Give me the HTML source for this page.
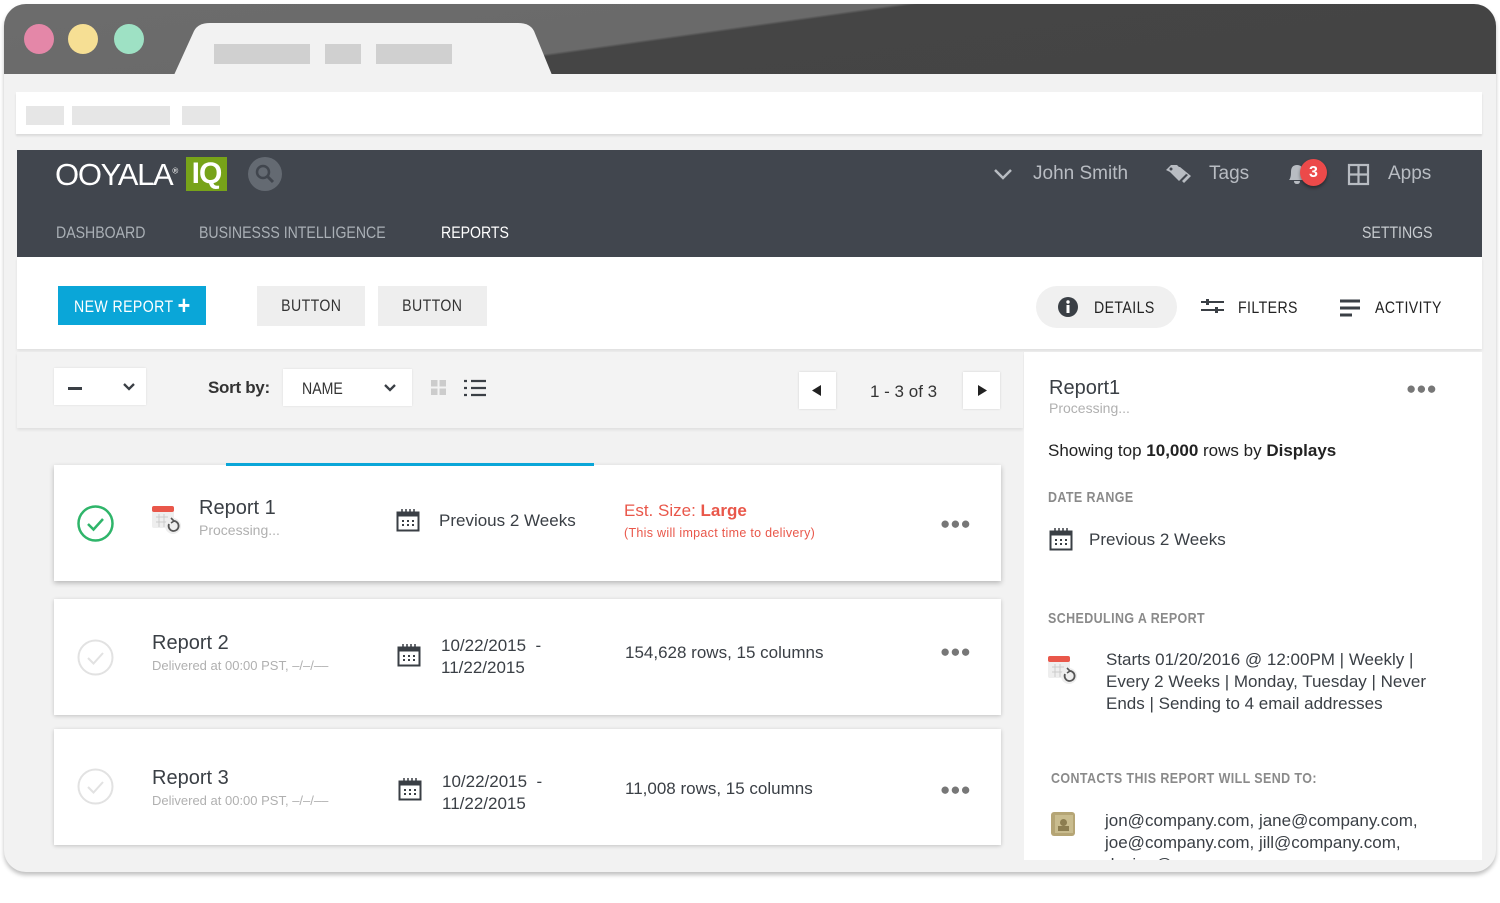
<!DOCTYPE html>
<html><head><meta charset="utf-8"><style>
*{box-sizing:border-box;margin:0;padding:0}
body{width:1500px;height:903px;background:#fff;font-family:"Liberation Sans",sans-serif;position:relative;overflow:hidden;color:#333}
.abs{position:absolute}
.nar{transform:scaleX(.83);transform-origin:left center;white-space:nowrap}
.ns{display:inline-block;transform:scaleX(.83);transform-origin:center}
.win{left:4px;top:4px;width:1492px;height:868px;border-radius:22px;background:#f2f2f2;box-shadow:0 3px 4px rgba(0,0,0,.25);overflow:hidden}
.top{left:0;top:0;width:1492px;height:70px;background:linear-gradient(172deg,#6c6c6c 0,#6a6a6a 45%,#454545 46%,#444 100%)}
.dot{width:30px;height:30px;border-radius:50%;top:20px}
.bar{background:#d0d0d0;height:20px}
.nav{left:17px;top:150px;width:1465px;height:107px;background:#41464e}
.navt{color:#aab0b6;font-size:17px;top:73px}
.hd{color:#b8bcc2;font-size:19px;top:13px}
.btn{background:#eee;font-size:17px;color:#333;text-align:center;line-height:40px;letter-spacing:.5px}
.card{background:#fff;box-shadow:0 1px 4px rgba(0,0,0,.2)}
.t{color:#3a3f45}
.dots{font-size:17px;color:#777;letter-spacing:0px}
.lab{font-size:15px;font-weight:bold;color:#8a8a8a;letter-spacing:.5px}
</style></head><body>
<div class="abs win">
 <div class="abs top"></div>
 <div class="abs dot" style="left:20px;background:#e487a8"></div>
 <div class="abs dot" style="left:64px;background:#f6df94"></div>
 <div class="abs dot" style="left:110px;background:#9ee1c4"></div>
 <svg class="abs" style="left:170px;top:19px" width="380" height="52"><path d="M0 52 L20 8 Q24 0 36 0 H344 Q356 0 360 8 L378 52Z" fill="#f2f2f2"/></svg>
 <div class="abs bar" style="left:210px;top:40px;width:96px"></div>
 <div class="abs bar" style="left:321px;top:40px;width:36px"></div>
 <div class="abs bar" style="left:372px;top:40px;width:76px"></div>
 <div class="abs" style="left:12px;top:88px;width:1466px;height:42px;background:#fff;box-shadow:0 2px 2px rgba(0,0,0,.1)"></div>
 <div class="abs" style="left:22px;top:102px;width:38px;height:19px;background:#e6e6e6"></div>
 <div class="abs" style="left:68px;top:102px;width:98px;height:19px;background:#e6e6e6"></div>
 <div class="abs" style="left:178px;top:102px;width:38px;height:19px;background:#e6e6e6"></div>
</div>
<div class="abs nav">
 <div class="abs" style="left:38px;top:7px;color:#fff;font-size:31px;letter-spacing:-1.3px">OOYALA<sup style="font-size:8px">®</sup></div>
 <div class="abs" style="left:169px;top:7px;width:41px;height:34px;background:#77a319;color:#fff;font-size:30px;font-weight:bold;line-height:34px;text-align:center;letter-spacing:-1px">IQ</div>
 <div class="abs" style="left:231px;top:7px;width:34px;height:34px;border-radius:50%;background:#646a72"><svg width="34" height="34"><circle cx="15" cy="15" r="6" fill="none" stroke="#41464e" stroke-width="2.5"/><path d="M19 19 L25 25" stroke="#41464e" stroke-width="3"/></svg></div>
 <svg class="abs" style="left:976px;top:17px" width="20" height="14"><path d="M2 3 L10 11 L18 3" fill="none" stroke="#b8bcc2" stroke-width="2.5"/></svg>
 <div class="abs hd" style="left:1016px">John Smith</div>
 <svg class="abs" style="left:1148px;top:13px" width="30" height="22"><path d="M1 7 L6 2 H12 L21 11 L14 18 L5 9Z" fill="#b8bcc2"/><path d="M9 4 H15 L26 13 L19 20 L17 18 L23 12 Z" fill="#b8bcc2"/><circle cx="6" cy="6" r="1.5" fill="#41464e"/></svg>
 <div class="abs hd" style="left:1192px">Tags</div>
 <svg class="abs" style="left:1269px;top:12px" width="22" height="24"><path d="M3 18 Q5 16 5 10 Q5 3 11 3 Q17 3 17 10 Q17 16 19 18Z M8 19 H14 Q14 22 11 22 Q8 22 8 19Z" fill="#b8bcc2"/></svg>
 <div class="abs" style="left:1283px;top:9px;width:27px;height:27px;border-radius:50%;background:#ec4a4a;color:#fff;font-size:16px;font-weight:bold;text-align:center;line-height:27px;box-shadow:0 2px 3px rgba(0,0,0,.4)">3</div>
 <svg class="abs" style="left:1330px;top:13px" width="24" height="24"><rect x="2" y="2" width="19" height="19" fill="none" stroke="#b8bcc2" stroke-width="2.2"/><path d="M11.5 2V21M2 11.5H21" stroke="#b8bcc2" stroke-width="2.2"/></svg>
 <div class="abs hd" style="left:1371px">Apps</div>
 <div class="abs navt nar" style="left:39px">DASHBOARD</div>
 <div class="abs navt nar" style="left:182px">BUSINESSS INTELLIGENCE</div>
 <div class="abs navt nar" style="left:424px;color:#fff">REPORTS</div>
 <div class="abs navt nar" style="left:1345px;color:#c8ccd0">SETTINGS</div>
</div>
<div class="abs" style="left:17px;top:257px;width:1465px;height:92px;background:#fff;box-shadow:0 2px 3px rgba(0,0,0,.08)"></div>
<div class="abs" style="left:58px;top:286px;width:148px;height:39px;background:#0aa6d8"></div>
<div class="abs nar" style="left:74px;top:286px;color:#fff;font-size:17px;line-height:39px;letter-spacing:.5px">NEW REPORT <b style="font-size:26px;vertical-align:-2px">+</b></div>
<div class="abs btn" style="left:257px;top:286px;width:108px"><span class="ns">BUTTON</span></div>
<div class="abs btn" style="left:378px;top:286px;width:109px"><span class="ns">BUTTON</span></div>
<div class="abs" style="left:1036px;top:286px;width:141px;height:42px;border-radius:21px;background:#f0f0f0"></div>
<svg class="abs" style="left:1057px;top:296px" width="22" height="22"><circle cx="11" cy="11" r="10" fill="#3a3f45"/><rect x="9.5" y="9" width="3" height="8" fill="#fff"/><circle cx="11" cy="6" r="1.7" fill="#fff"/></svg>
<div class="abs nar" style="left:1094px;top:298px;font-size:17px;color:#222;letter-spacing:.5px">DETAILS</div>
<svg class="abs" style="left:1200px;top:297px" width="26" height="20"><path d="M1 5H24M1 13H24" stroke="#3a3f45" stroke-width="2"/><rect x="6" y="2" width="3" height="6" fill="#3a3f45"/><rect x="15" y="10" width="3" height="6" fill="#3a3f45"/></svg>
<div class="abs nar" style="left:1238px;top:298px;font-size:17px;color:#222;letter-spacing:.5px">FILTERS</div>
<svg class="abs" style="left:1339px;top:299px" width="24" height="18"><path d="M1 2H21M1 9H21M1 16H13" stroke="#3a3f45" stroke-width="3"/></svg>
<div class="abs nar" style="left:1375px;top:298px;font-size:17px;color:#222;letter-spacing:.5px">ACTIVITY</div>
<!-- toolbar -->
<div class="abs" style="left:17px;top:352px;width:1006px;height:76px;background:#f3f3f3;box-shadow:0 2px 3px rgba(0,0,0,.08)"></div>
<div class="abs card" style="left:54px;top:368px;width:92px;height:37px;box-shadow:0 0 2px rgba(0,0,0,.1)"></div>
<div class="abs" style="left:68px;top:387px;width:14px;height:3px;background:#3a3f45"></div>
<svg class="abs" style="left:122px;top:382px" width="14" height="10"><path d="M2 2L7 7L12 2" fill="none" stroke="#3a3f45" stroke-width="2.3"/></svg>
<div class="abs" style="left:208px;top:378px;font-size:17px;font-weight:bold;color:#333;letter-spacing:-.3px">Sort by:</div>
<div class="abs card" style="left:283px;top:369px;width:129px;height:37px;box-shadow:0 0 2px rgba(0,0,0,.1)"></div>
<div class="abs nar" style="left:302px;top:379px;font-size:17px;color:#333">NAME</div>
<svg class="abs" style="left:383px;top:383px" width="14" height="10"><path d="M2 2L7 7L12 2" fill="none" stroke="#3a3f45" stroke-width="2.3"/></svg>
<svg class="abs" style="left:430px;top:379px" width="18" height="18"><rect x="1" y="1" width="6.5" height="6.5" fill="#ccc"/><rect x="9.5" y="1" width="6.5" height="6.5" fill="#ccc"/><rect x="1" y="9.5" width="6.5" height="6.5" fill="#ccc"/><rect x="9.5" y="9.5" width="6.5" height="6.5" fill="#ccc"/></svg>
<svg class="abs" style="left:463px;top:379px" width="24" height="18"><path d="M1 2H4M8 2H23M1 9H4M8 9H23M1 16H4M8 16H23" stroke="#3a3f45" stroke-width="2.2"/></svg>
<div class="abs card" style="left:799px;top:372px;width:37px;height:37px;box-shadow:0 0 2px rgba(0,0,0,.15)"><svg width="37" height="37"><path d="M22 13V24L13 18.5Z" fill="#222"/></svg></div>
<div class="abs" style="left:870px;top:382px;font-size:17px;color:#333">1 - 3 of 3</div>
<div class="abs card" style="left:963px;top:372px;width:37px;height:37px;box-shadow:0 0 2px rgba(0,0,0,.15)"><svg width="37" height="37"><path d="M15 13V24L24 18.5Z" fill="#222"/></svg></div>
<!-- cards -->
<div class="abs card" style="left:54px;top:465px;width:947px;height:116px;box-shadow:0 2px 5px rgba(0,0,0,.25)"></div>
<div class="abs" style="left:226px;top:463px;width:368px;height:3px;background:#0aa6d8"></div>
<svg class="abs" style="left:76px;top:505px" width="40" height="38"><circle cx="19.5" cy="18.5" r="17" fill="none" stroke="#2fb56a" stroke-width="2.5"/><path d="M12 19L17.5 24.5L27 14" fill="none" stroke="#2fb56a" stroke-width="2.5"/></svg>
<svg class="abs" style="left:150px;top:502px" width="34" height="34"><rect x="2" y="4" width="22" height="22" rx="2" fill="#eee"/><rect x="2" y="4" width="22" height="6" rx="2" fill="#e9574a"/><path d="M6 15H18M6 20H18M9 12V25M14 12V25" stroke="#ccc"/><circle cx="23" cy="24" r="8" fill="#eee"/><path d="M19 22 A5 5 0 1 0 23 19" fill="none" stroke="#555" stroke-width="1.8"/><path d="M21 16L24 19L21 21" fill="none" stroke="#555" stroke-width="1.6"/></svg>
<div class="abs t" style="left:199px;top:497px;font-size:20px">Report 1</div>
<div class="abs" style="left:199px;top:522px;font-size:14px;color:#b0b0b0">Processing...</div>
<svg class="abs" style="left:396px;top:508px" width="24" height="24"><rect x="1.5" y="4.5" width="21" height="18" fill="none" stroke="#3a3f45" stroke-width="2"/><rect x="1.5" y="4.5" width="21" height="4" fill="#3a3f45"/><path d="M6 1V5M10 1V5M14 1V5M18 1V5" stroke="#3a3f45" stroke-width="1.5"/><path d="M6 13h2M11 13h2M16 13h2M6 17h2M11 17h2M16 17h2" stroke="#3a3f45" stroke-width="2"/></svg>
<div class="abs t" style="left:439px;top:511px;font-size:17px">Previous 2 Weeks</div>
<div class="abs" style="left:624px;top:501px;font-size:17px;color:#e9574a">Est. Size: <b>Large</b></div>
<div class="abs" style="left:624px;top:526px;font-size:12.5px;color:#e9574a;letter-spacing:.3px">(This will impact time to delivery)</div>
<div class="abs dots" style="left:940px;top:514px">●●●</div>

<div class="abs card" style="left:54px;top:599px;width:947px;height:116px"></div>
<svg class="abs" style="left:76px;top:639px" width="40" height="38"><circle cx="19.5" cy="18.5" r="17" fill="none" stroke="#e2e2e2" stroke-width="2"/><path d="M12 19L17.5 24.5L27 14" fill="none" stroke="#e2e2e2" stroke-width="2"/></svg>
<div class="abs t" style="left:152px;top:632px;font-size:20px">Report 2</div>
<div class="abs" style="left:152px;top:658px;font-size:13px;color:#b0b0b0">Delivered at 00:00 PST, –/–/––</div>
<svg class="abs" style="left:397px;top:643px" width="24" height="24"><rect x="1.5" y="4.5" width="21" height="18" fill="none" stroke="#3a3f45" stroke-width="2"/><rect x="1.5" y="4.5" width="21" height="4" fill="#3a3f45"/><path d="M6 1V5M10 1V5M14 1V5M18 1V5" stroke="#3a3f45" stroke-width="1.5"/><path d="M6 13h2M11 13h2M16 13h2M6 17h2M11 17h2M16 17h2" stroke="#3a3f45" stroke-width="2"/></svg>
<div class="abs t" style="left:441px;top:635px;font-size:17px;line-height:22px">10/22/2015 &nbsp;-<br>11/22/2015</div>
<div class="abs t" style="left:625px;top:643px;font-size:17px">154,628 rows, 15 columns</div>
<div class="abs dots" style="left:940px;top:642px">●●●</div>

<div class="abs card" style="left:54px;top:729px;width:947px;height:116px"></div>
<svg class="abs" style="left:76px;top:768px" width="40" height="38"><circle cx="19.5" cy="18.5" r="17" fill="none" stroke="#e2e2e2" stroke-width="2"/><path d="M12 19L17.5 24.5L27 14" fill="none" stroke="#e2e2e2" stroke-width="2"/></svg>
<div class="abs t" style="left:152px;top:767px;font-size:20px">Report 3</div>
<div class="abs" style="left:152px;top:793px;font-size:13px;color:#b0b0b0">Delivered at 00:00 PST, –/–/––</div>
<svg class="abs" style="left:398px;top:777px" width="24" height="24"><rect x="1.5" y="4.5" width="21" height="18" fill="none" stroke="#3a3f45" stroke-width="2"/><rect x="1.5" y="4.5" width="21" height="4" fill="#3a3f45"/><path d="M6 1V5M10 1V5M14 1V5M18 1V5" stroke="#3a3f45" stroke-width="1.5"/><path d="M6 13h2M11 13h2M16 13h2M6 17h2M11 17h2M16 17h2" stroke="#3a3f45" stroke-width="2"/></svg>
<div class="abs t" style="left:442px;top:771px;font-size:17px;line-height:22px">10/22/2015 &nbsp;-<br>11/22/2015</div>
<div class="abs t" style="left:625px;top:779px;font-size:17px">11,008 rows, 15 columns</div>
<div class="abs dots" style="left:940px;top:780px">●●●</div>

<!-- details panel -->
<div class="abs" style="left:1024px;top:352px;width:458px;height:508px;background:#fff;overflow:hidden">
 <div class="abs t" style="left:25px;top:25px;font-size:20px">Report1</div>
 <div class="abs" style="left:25px;top:48px;font-size:14px;color:#b0b0b0">Processing...</div>
 <div class="abs dots" style="left:382px;top:27px">●●●</div>
 <div class="abs" style="left:24px;top:89px;font-size:17px;color:#222">Showing top <b>10,000</b> rows by <b>Displays</b></div>
 <div class="abs lab nar" style="left:24px;top:137px">DATE RANGE</div>
 <svg class="abs" style="left:25px;top:175px" width="24" height="24"><rect x="1.5" y="4.5" width="21" height="18" fill="none" stroke="#3a3f45" stroke-width="2"/><rect x="1.5" y="4.5" width="21" height="4" fill="#3a3f45"/><path d="M6 1V5M10 1V5M14 1V5M18 1V5" stroke="#3a3f45" stroke-width="1.5"/><path d="M6 13h2M11 13h2M16 13h2M6 17h2M11 17h2M16 17h2" stroke="#3a3f45" stroke-width="2"/></svg>
 <div class="abs t" style="left:65px;top:178px;font-size:17px">Previous 2 Weeks</div>
 <div class="abs lab nar" style="left:24px;top:258px">SCHEDULING A REPORT</div>
 <svg class="abs" style="left:22px;top:300px" width="34" height="34"><rect x="2" y="4" width="22" height="22" rx="2" fill="#eee"/><rect x="2" y="4" width="22" height="6" rx="2" fill="#e9574a"/><path d="M6 15H18M6 20H18M9 12V25M14 12V25" stroke="#ccc"/><circle cx="23" cy="24" r="8" fill="#eee"/><path d="M19 22 A5 5 0 1 0 23 19" fill="none" stroke="#555" stroke-width="1.8"/><path d="M21 16L24 19L21 21" fill="none" stroke="#555" stroke-width="1.6"/></svg>
 <div class="abs t" style="left:82px;top:297px;font-size:17px;line-height:22px;width:330px">Starts 01/20/2016 @ 12:00PM | Weekly | Every 2 Weeks | Monday, Tuesday | Never Ends | Sending to 4 email addresses</div>
 <div class="abs lab nar" style="left:27px;top:418px">CONTACTS THIS REPORT WILL SEND TO:</div>
 <div class="abs" style="left:27px;top:460px;width:24px;height:24px;border-radius:3px;background:#b5a575"><div class="abs" style="left:4px;top:3px;width:18px;height:18px;background:#c9bc8e"></div><div class="abs" style="left:9px;top:7px;width:7px;height:7px;border-radius:50%;background:#8c7d50"></div><div class="abs" style="left:7px;top:14px;width:11px;height:5px;background:#8c7d50"></div></div>
 <div class="abs t" style="left:81px;top:458px;font-size:17px;line-height:22px;width:330px">jon@company.com, jane@company.com, joe@company.com, jill@company.com, design@company.com, analysis@company.com</div>
</div>
</body></html>
